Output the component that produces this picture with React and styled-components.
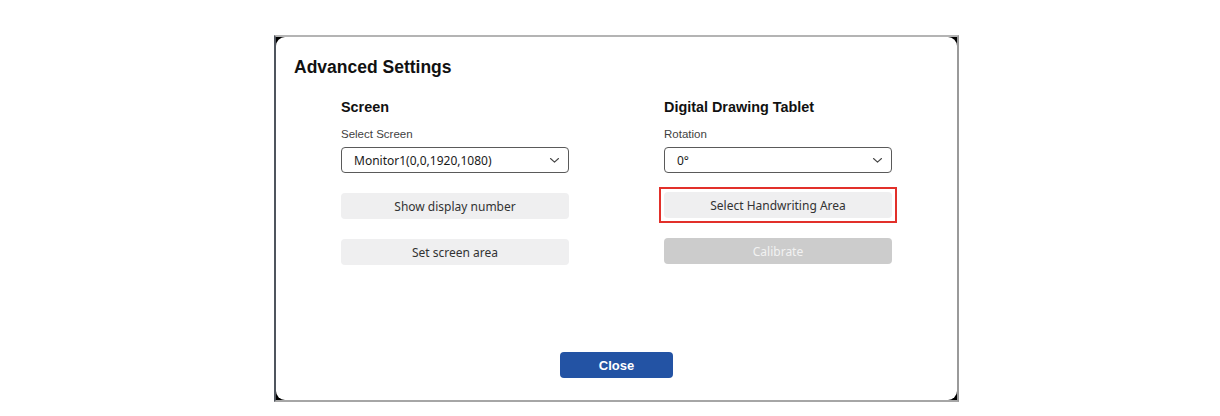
import React from "react";
import styled, { createGlobalStyle } from "styled-components";

const GlobalStyle = createGlobalStyle`
  html, body {
    margin: 0;
    padding: 0;
    background: #ffffff;
  }
  body {
    font-family: "Liberation Sans", Arial, sans-serif;
  }
`;

const Page = styled.div`
  width: 1220px;
  height: 416px;
  box-sizing: border-box;
  padding: 35px 0 0 274px;
  background: #ffffff;
`;

/* Window frame: dark corners behind a rounded white panel */
const Frame = styled.div`
  width: 685px;
  height: 367px;
  box-sizing: border-box;
  background: #000000;
  border-top: 2px solid #b4b4b4;
  border-left: 2px solid #4f555e;
  border-right: 2px solid #9a9a9a;
  border-bottom: 2px solid #a6a6a6;
  display: flex;
`;

const Panel = styled.div`
  flex: 1;
  background: #ffffff;
  border-radius: 9px;
  display: flex;
  flex-direction: column;
  padding: 20px 0 22px;
`;

const Title = styled.h1`
  margin: 0 0 0 18px;
  font-family: "Liberation Sans", Arial, sans-serif;
  font-weight: 700;
  font-size: 17.5px;
  line-height: 20px;
  color: #111111;
`;

const Columns = styled.div`
  display: grid;
  grid-template-columns: 228px 228px;
  column-gap: 95px;
  padding-left: 65px;
  margin-top: 21px;
`;

const Column = styled.section`
  display: flex;
  flex-direction: column;
`;

const Heading = styled.h2`
  margin: 0;
  font-family: "Liberation Sans", Arial, sans-serif;
  font-weight: 700;
  font-size: 14.4px;
  line-height: 18px;
  color: #111111;
`;

const Label = styled.label`
  margin-top: 11px;
  font-family: "Liberation Sans", Arial, sans-serif;
  font-size: 11.5px;
  line-height: 14px;
  color: #3f3f3f;
`;

const Select = styled.div`
  margin-top: 6px;
  height: 26px;
  box-sizing: border-box;
  border: 1px solid #5a5a5a;
  border-radius: 4px;
  display: flex;
  align-items: center;
  justify-content: space-between;
  padding: 0 8px 0 12px;
  font-family: "Noto Sans", "Open Sans", sans-serif;
  font-size: 12px;
  color: #1a1a1a;
  background: #ffffff;
`;

const Chevron = () => (
  <svg width="11" height="7" viewBox="0 0 11 7" fill="none">
    <path d="M1.5 1.5 L5.5 5.2 L9.5 1.5" stroke="#444444" strokeWidth="1.1" strokeLinecap="round" strokeLinejoin="round" />
  </svg>
);

const ActionButton = styled.button`
  position: relative;
  margin-top: ${(p) => p.$gap || 20}px;
  height: 26px;
  width: 100%;
  border: none;
  border-radius: 4px;
  background: ${(p) => (p.disabled ? "#cccccc" : "#efeff0")};
  color: ${(p) => (p.disabled ? "#f2f2f2" : "#333333")};
  font-family: "Noto Sans", "Open Sans", sans-serif;
  font-size: 12px;
  padding: 0;
  cursor: ${(p) => (p.disabled ? "default" : "pointer")};

  /* square red marker drawn around the highlighted action */
  &::after {
    content: "";
    display: ${(p) => (p.$highlight ? "block" : "none")};
    position: absolute;
    inset: -5px;
    border: 2px solid #e2302a;
    pointer-events: none;
  }
`;

const Footer = styled.div`
  margin-top: auto;
  display: flex;
  justify-content: center;
`;

const CloseButton = styled.button`
  width: 113px;
  height: 26px;
  border: none;
  border-radius: 4px;
  background: #2353a4;
  color: #ffffff;
  font-family: "Liberation Sans", Arial, sans-serif;
  font-weight: 700;
  font-size: 13px;
  cursor: pointer;
`;

export default function App() {
  return (
    <>
      <GlobalStyle />
      <Page>
        <Frame>
          <Panel>
            <Title>Advanced Settings</Title>
            <Columns>
              <Column>
                <Heading>Screen</Heading>
                <Label>Select Screen</Label>
                <Select>
                  <span>Monitor1(0,0,1920,1080)</span>
                  <Chevron />
                </Select>
                <ActionButton>Show display number</ActionButton>
                <ActionButton>Set screen area</ActionButton>
              </Column>
              <Column>
                <Heading>Digital Drawing Tablet</Heading>
                <Label>Rotation</Label>
                <Select>
                  <span>0°</span>
                  <Chevron />
                </Select>
                <ActionButton $gap={19} $highlight>Select Handwriting Area</ActionButton>
                <ActionButton disabled>Calibrate</ActionButton>
              </Column>
            </Columns>
            <Footer>
              <CloseButton>Close</CloseButton>
            </Footer>
          </Panel>
        </Frame>
      </Page>
    </>
  );
}
